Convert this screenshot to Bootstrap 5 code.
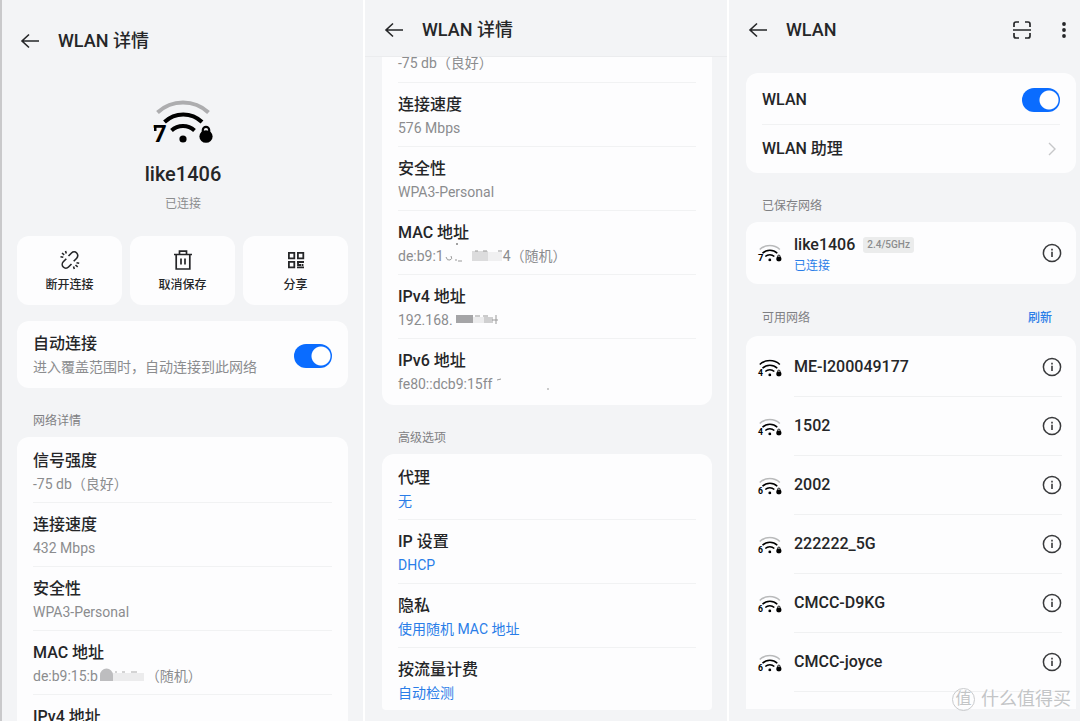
<!DOCTYPE html>
<html lang="zh-CN">
<head>
<meta charset="utf-8">
<meta name="viewport" content="width=device-width, initial-scale=1">
<title>WLAN 详情</title>
<link href="https://cdn.jsdelivr.net/npm/bootstrap@5.3.0/dist/css/bootstrap.min.css" rel="stylesheet">
<style>
  :root { --ink: #252628; --muted-ink: #8b8c8e; --accent: #2a7de8; --page: #f3f4f6; }
  body { font-family: Roboto, "Noto Sans CJK SC", sans-serif; color: var(--ink); background: var(--page); }
  a { color: var(--accent); text-decoration: none; }
  .screens { display: grid; grid-template-columns: 365fr 364fr 351fr; height: 100vh; overflow: hidden; }
  .phone { display: flex; flex-direction: column; min-width: 0; min-height: 0; overflow: hidden; background: var(--page); padding: 0 15px 0 17px; border-right: 2px solid #fff; }
  .phone-one { border-left: 2px solid #c9c9cb; padding-left: 15px; }
  .phone-three { border-right: 0; padding-right: 4px; }
  .topbar { display: flex; align-items: center; flex: none; height: 60px; gap: 18px; }
  .phone-one .topbar { height: 82px; padding-left: 3px; }
  .phone-two .topbar { height: 57px; margin: 0 -15px 0 -17px; padding: 3px 0 0 19px; border-bottom: 1px solid #ebecee; }
  .phone-three .topbar { padding: 0 2px; }
  .topbar h1 { font-size: 18px; line-height: 24px; font-weight: 500; margin: 0; }
  .plain-btn { border: 0; background: none; padding: 0; line-height: 0; color: var(--ink); }
  svg { flex: none; overflow: visible; }
  .panel-card { background: #fdfdfe; border-radius: 12px; flex: none; padding: 2px 0; }
  .field { height: 64px; margin: 0 16px; padding-top: 11px; border-bottom: 1px solid #f1f2f3; }
  .field:last-child { border-bottom: 0; }
  .t-main { font-size: 16px; line-height: 22px; font-weight: 500; margin: 0; }
  .t-sub { font-size: 14px; line-height: 24px; color: var(--muted-ink); display: flex; align-items: center; white-space: nowrap; }
  .t-sub a { line-height: 24px; }
  .t-label { font-size: 12px; line-height: 16px; color: #7f8083; font-weight: 400; margin: 25px 0 8px; padding: 0 16px; flex: none; }
  .label-row { margin: 26px 0 10px; flex: none; }
  .label-row .t-label { margin: 0; }
  .label-row a.t-label { color: var(--accent); padding-right: 24px; font-weight: 500; }
  .hero { text-align: center; padding: 17px 0 0 1px; flex: none; }
  .hero h2 { font-size: 20px; line-height: 26px; font-weight: 500; margin: 17px 0 9px; }
  .hero p { font-size: 12px; line-height: 16px; color: var(--muted-ink); margin: 0; }
  .action { flex: 1 1 0; height: 69px; border: 0; border-radius: 12px; background: #fdfdfe; color: var(--ink); font-size: 12px; line-height: 16px; font-weight: 500; display: flex; flex-direction: column; align-items: center; gap: 6px; padding: 13px 0 0; }
  .form-switch .toggle.form-check-input { width: 38px; height: 24px; margin: 0; border: 0; border-radius: 12px; background: radial-gradient(circle at 27px 12px, #fff 9px, #0a6cff 10px); float: none; }
  .auto-row { height: 67px; padding: 2px 16px 0; }
  .clipped-top { border-radius: 0 0 12px 12px; padding-top: 0; }
  .clipped-top .tail { height: 26px; padding-top: 0; }
  .tail .t-sub { line-height: 12px; }
  .advanced { border-radius: 12px 12px 4px 4px; padding-bottom: 0; }
  .advanced .field:last-child { height: 62px; }
  .master { margin-top: 13px; }
  .setting { height: 49px; margin: 0 16px; border-top: 1px solid #f1f2f3; }
  .setting:first-child { height: 51px; border: 0; padding-top: 2px; }
  .net { display: flex; align-items: center; height: 59px; padding: 0 14px 0 12px; }
  .net-body { flex: 1; align-self: stretch; display: flex; align-items: center; justify-content: space-between; margin-left: 12px; border-bottom: 1px solid #f0f1f2; }
  .open-list { border-radius: 12px 12px 0 0; padding: 2px 0 17px; }
  .saved .net { height: 58px; }
  .saved .net-body { border: 0; }
  .band { font-size: 10px; line-height: 16px; font-weight: 500; color: #8b8c8e; background: #ebecec; border-radius: 3px; padding: 0 4px; }
  .connected { display: block; font-size: 12px; line-height: 20px; color: var(--accent); }
  .brandmark { position: absolute; right: 9px; bottom: 10px; color: #c3c5c7; text-shadow: 1px 1px 0 #fff; font-size: 18px; line-height: 24px; gap: 6px; }
  .brandmark .seal { width: 23px; height: 23px; border: 1px solid #c9cbcd; border-radius: 50%; font-size: 16px; line-height: 20px; text-align: center; }
  svg text { font-family: Roboto, sans-serif; font-weight: 700; }
</style>
<script src="https://cdn.jsdelivr.net/npm/bootstrap@5.3.0/dist/js/bootstrap.bundle.min.js"></script>
</head>
<body>
<svg class="d-none" aria-hidden="true">
  <symbol id="back" viewBox="0 0 20 16"><path d="M9 1.500 2 8l7 6.500M2 8h17" fill="none" stroke="currentColor" stroke-width="1.600"/></symbol>
  <symbol id="waves" viewBox="0 0 61 45">
    <path d="M11.500 23A27 27 0 0 1 49 23M18.500 31.500A17 17 0 0 1 41.500 31.500" fill="none" stroke="#000" stroke-width="4"/>
    <circle cx="30" cy="40" r="3.600"/>
    <ellipse cx="53" cy="37.500" rx="6.600" ry="6.300"/>
    <path d="M49.800 34v-3a3.200 3.200 0 0 1 6.400 0v3" fill="none" stroke="#000" stroke-width="2.200"/>
  </symbol>
  <symbol id="outer" viewBox="0 0 61 45"><path d="M4.500 13.500A37.500 37.500 0 0 1 55.500 13.500" fill="none" stroke="currentColor" stroke-width="4"/></symbol>
  <symbol id="info" viewBox="0 0 20 20"><circle cx="10" cy="10" r="8.600" fill="none" stroke="#38393b" stroke-width="1.500"/><path d="M10 8.800v5.200M10 5.700v1.900" stroke="#38393b" stroke-width="1.600"/></symbol>
</svg>

<main class="screens">
  <section class="phone phone-one">
    <header class="topbar">
      <button class="plain-btn" aria-label="返回"><svg width="20" height="16"><use href="#back"/></svg></button>
      <h1>WLAN 详情</h1>
    </header>
    <div class="hero">
      <svg width="61" height="45" class="d-block mx-auto"><use href="#outer" color="#adadaf"/><use href="#waves"/><text x="0" y="43" font-size="24">7</text><path d="M1 26h2.500v6H1z"/></svg>
      <h2>like1406</h2>
      <p>已连接</p>
    </div>
    <div class="d-flex gap-2 mt-4 flex-shrink-0">
      <button class="action">
        <svg width="22" height="22" viewBox="0 0 22 22" fill="none" stroke="currentColor" stroke-width="1.600"><path d="M9.500 7 12.500 4a3.600 3.600 0 0 1 5.200 5.200L14.700 12.300M12.500 15 9.500 18A3.600 3.600 0 0 1 4.300 12.800L7.300 9.700M6.500 2l.8 2.500M3 4l2.200 1.800M1.500 7.700l2.800.5M14.500 17.500l.8 2.600M16.500 16l2.200 1.800M17.500 13.700l2.700.5"/></svg>
        断开连接
      </button>
      <button class="action">
        <svg width="22" height="22" viewBox="0 0 22 22" fill="none" stroke="currentColor" stroke-width="1.700"><path d="M2 5.500h18M4.200 5.500V20h13.600V5.500M7.500 5V2.200h7V5M9 9.500v6M13 9.500v6"/></svg>
        取消保存
      </button>
      <button class="action">
        <svg width="22" height="22" viewBox="0 0 22 22" fill="none" stroke="currentColor" stroke-width="1.800"><path d="M3.900 3.900h5.400v5.400H3.900zM12.900 3.900h5.400v5.400h-5.400zM3.900 12.900h5.400v5.400H3.900zM12 13h7M13 12v4h3M12 18.300h7M17.500 15v2"/></svg>
        分享
      </button>
    </div>
    <div class="panel-card auto-row mt-3 d-flex align-items-center justify-content-between form-switch">
      <label for="auto">
        <span class="t-main d-block">自动连接</span>
        <span class="t-sub">进入覆盖范围时，自动连接到此网络</span>
      </label>
      <input class="form-check-input toggle" type="checkbox" role="switch" id="auto" checked>
    </div>
    <h3 class="t-label">网络详情</h3>
    <div class="panel-card">
      <div class="field"><p class="t-main">信号强度</p><div class="t-sub">-75 db（良好）</div></div>
      <div class="field"><p class="t-main">连接速度</p><div class="t-sub">432 Mbps</div></div>
      <div class="field"><p class="t-main">安全性</p><div class="t-sub">WPA3-Personal</div></div>
      <div class="field"><p class="t-main">MAC 地址</p><div class="t-sub">de:b9:15:b<svg width="48" height="14" viewBox="0 0 48 14"><path d="M2 12V6a6 6 0 0 1 13 0v6z" fill="#bdbdbf"/><path d="M15 4h31v8H15z" fill="#ececed"/><path d="M17 3h2M24 3h3M33 3h6" stroke="#aaa"/></svg>（随机）</div></div>
      <div class="field"><p class="t-main">IPv4 地址</p></div>
    </div>
  </section>

  <section class="phone phone-two">
    <header class="topbar">
      <button class="plain-btn" aria-label="返回"><svg width="20" height="16"><use href="#back"/></svg></button>
      <h1>WLAN 详情</h1>
    </header>
    <div class="panel-card clipped-top">
      <div class="field tail"><div class="t-sub">-75 db（良好）</div></div>
      <div class="field"><p class="t-main">连接速度</p><div class="t-sub">576 Mbps</div></div>
      <div class="field"><p class="t-main">安全性</p><div class="t-sub">WPA3-Personal</div></div>
      <div class="field"><p class="t-main">MAC 地址</p><div class="t-sub">de:b9:1<svg width="59" height="14" viewBox="0 0 59 14"><path d="M2 8q1 4 4 3t1-4M11 11h2M14 12h4" fill="none" stroke="#999"/><path d="M12-5h2" stroke="#444"/><path d="M28 2h16v10H28z" fill="#dcdcdd"/><path d="M44 3h14v9H44z" fill="#f0f0f1"/><path d="M31 2h3M39 2h4M54 2h4" stroke="#999"/></svg>4（随机）</div></div>
      <div class="field"><p class="t-main">IPv4 地址</p><div class="t-sub">192.168.<svg width="46" height="14" viewBox="0 0 46 14"><path d="M3 2h17v8H3z" fill="#a5a5a7"/><path d="M20 4h11v6H20z" fill="#ececed"/><path d="M31 4h9v6h-9z" fill="#cfcfd0"/><path d="M22 3h5M30 3h5M43 2v9M39 7h6" stroke="#999"/></svg></div></div>
      <div class="field"><p class="t-main">IPv6 地址</p><div class="t-sub">fe80::dcb9:15ff<svg width="60" height="14" viewBox="0 0 60 14"><path d="M5 3l4-1M55 12h2" stroke="#999"/></svg></div></div>
    </div>
    <h3 class="t-label">高级选项</h3>
    <div class="panel-card advanced">
      <div class="field"><p class="t-main">代理</p><div class="t-sub"><a href="#">无</a></div></div>
      <div class="field"><p class="t-main">IP 设置</p><div class="t-sub"><a href="#">DHCP</a></div></div>
      <div class="field"><p class="t-main">隐私</p><div class="t-sub"><a href="#">使用随机 MAC 地址</a></div></div>
      <div class="field"><p class="t-main">按流量计费</p><div class="t-sub"><a href="#">自动检测</a></div></div>
    </div>
  </section>

  <section class="phone phone-three position-relative">
    <header class="topbar">
      <button class="plain-btn" aria-label="返回"><svg width="20" height="16"><use href="#back"/></svg></button>
      <h1>WLAN</h1>
      <button class="plain-btn ms-auto" aria-label="扫一扫"><svg width="20" height="20" viewBox="0 0 20 20" fill="none" stroke="currentColor" stroke-width="1.700"><path d="M2 7V4a2 2 0 0 1 2-2h3M13 2h3a2 2 0 0 1 2 2v3M18 13v3a2 2 0 0 1-2 2h-3M7 18H4a2 2 0 0 1-2-2v-3M1 10h18"/></svg></button>
      <button class="plain-btn ps-2 me-1" aria-label="更多"><svg width="12" height="20" viewBox="0 0 12 20" fill="currentColor"><circle cx="6" cy="4" r="1.900"/><circle cx="6" cy="10" r="1.900"/><circle cx="6" cy="16" r="1.900"/></svg></button>
    </header>
    <div class="panel-card master py-0">
      <div class="setting d-flex align-items-center justify-content-between form-switch ps-0">
        <label class="t-main" for="wlan">WLAN</label>
        <input class="form-check-input toggle" type="checkbox" role="switch" id="wlan" checked>
      </div>
      <a href="#" class="setting d-flex align-items-center justify-content-between text-reset">
        <span class="t-main">WLAN 助理</span>
        <svg width="16" height="16" viewBox="0 0 16 16"><path d="M5 2l6 6-6 6" fill="none" stroke="#c6c7c9" stroke-width="1.400"/></svg>
      </a>
    </div>
    <h3 class="t-label">已保存网络</h3>
    <div class="panel-card saved">
      <div class="net">
        <svg width="24" height="18" viewBox="0 0 61 45"><use href="#outer" color="#b9babb"/><use href="#waves"/><text x="0" y="43" font-size="24">7</text></svg>
        <div class="net-body">
          <div class="pt-1">
            <div class="d-flex align-items-center gap-2"><span class="t-main">like1406</span><span class="band">2.4/5GHz</span></div>
            <span class="connected">已连接</span>
          </div>
          <button class="plain-btn" aria-label="详情"><svg width="20" height="20"><use href="#info"/></svg></button>
        </div>
      </div>
    </div>
    <div class="label-row d-flex justify-content-between">
      <h3 class="t-label">可用网络</h3>
      <a href="#" class="t-label">刷新</a>
    </div>
    <div class="panel-card open-list" id="nets"></div>
    <div class="brandmark d-flex align-items-center"><span class="seal">值</span><span>什么值得买</span></div>
  </section>
</main>
<script>
  // [name, Wi-Fi generation, colour of the outermost signal arc]
  const networks = [
    ['ME-I200049177', 4, '#000'], ['1502', 4, '#b9babb'], ['2002', 6, '#b9babb'],
    ['222222_5G', 6, '#b9babb'], ['CMCC-D9KG', 6, '#b9babb'], ['CMCC-joyce', 6, '#b9babb']
  ];
  document.getElementById('nets').innerHTML = networks.map(([name, gen, arc]) => `
    <div class="net">
      <svg width="24" height="18" viewBox="0 0 61 45"><use href="#outer" color="${arc}"/><use href="#waves"/><text x="0" y="44" font-size="22">${gen}</text></svg>
      <div class="net-body"><span class="t-main">${name}</span><button class="plain-btn" aria-label="详情"><svg width="20" height="20"><use href="#info"/></svg></button></div>
    </div>`).join('');
</script>
</body>
</html>
